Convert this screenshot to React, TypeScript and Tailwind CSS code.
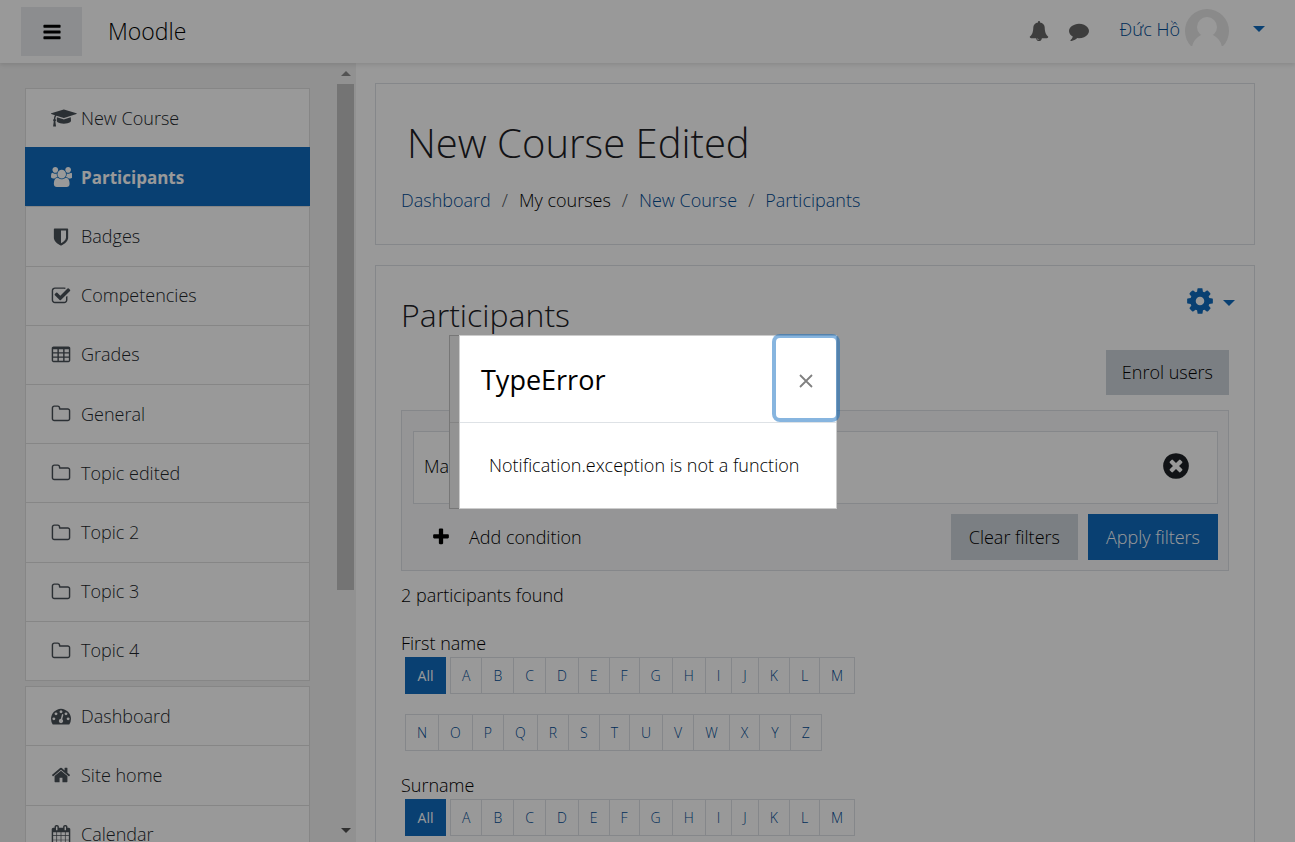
import React from 'react';

const PATHS = {
  bars: 'M1664 1344v128q0 26-19 45t-45 19h-1408q-26 0-45-19t-19-45v-128q0-26 19-45t45-19h1408q26 0 45 19t19 45zm0-512v128q0 26-19 45t-45 19h-1408q-26 0-45-19t-19-45v-128q0-26 19-45t45-19h1408q26 0 45 19t19 45zm0-512v128q0 26-19 45t-45 19h-1408q-26 0-45-19t-19-45v-128q0-26 19-45t45-19h1408q26 0 45 19t19 45z',
  cog: 'M1152 896q0-106-75-181t-181-75-181 75-75 181 75 181 181 75 181-75 75-181zm512-109v222q0 12-8 23t-20 13l-185 28q-19 54-39 91 35 50 107 138 10 12 10 25t-9 23q-27 37-99 108t-94 71q-12 0-26-9l-138-108q-44 23-91 38-16 136-29 186-7 28-36 28h-222q-14 0-24.5-8.5t-11.5-21.5l-28-184q-49-16-90-37l-141 107q-10 9-25 9-14 0-25-11-126-114-165-168-7-10-7-23 0-12 8-23 15-21 51-66.5t54-70.5q-27-50-41-99l-183-27q-13-2-21-12.5t-8-23.5v-222q0-12 8-23t19-13l186-28q14-46 39-92-40-57-107-138-10-12-10-24 0-10 9-23 26-36 98.5-107.5t94.5-71.5q13 0 26 10l138 107q44-23 91-38 16-136 29-186 7-28 36-28h222q14 0 24.5 8.5t11.5 21.5l28 184q49 16 90 37l142-107q9-9 24-9 13 0 25 10 129 119 165 170 7 8 7 22 0 12-8 23-15 21-51 66.5t-54 70.5q26 50 41 98l183 28q13 2 21 12.5t8 23.5z',
  timesCircle: 'M1277 1122q0-26-19-45l-181-181 181-181q19-19 19-45 0-27-19-46l-90-90q-19-19-46-19-26 0-45 19l-181 181-181-181q-19-19-45-19-27 0-46 19l-90 90q-19 19-19 46 0 26 19 45l181 181-181 181q-19 19-19 45 0 27 19 46l90 90q19 19 46 19 26 0 45-19l181-181 181 181q19 19 45 19 27 0 46-19l90-90q19-19 19-46zm387-226q0 209-103 385.5t-279.5 279.5-385.5 103-385.5-103-279.5-279.5-103-385.5 103-385.5 279.5-279.5 385.5-103 385.5 103 279.5 279.5 103 385.5z',
  plus: 'M1600 736v192q0 40-28 68t-68 28h-416v416q0 40-28 68t-68 28h-192q-40 0-68-28t-28-68v-416h-416q-40 0-68-28t-28-68v-192q0-40 28-68t68-28h416v-416q0-40 28-68t68-28h192q40 0 68 28t28 68v416h416q40 0 68 28t28 68z',
  home: 'M1472 992v480q0 26-19 45t-45 19h-384v-384h-256v384h-384q-26 0-45-19t-19-45v-480q0-1 .5-3t.5-3l575-474 575 474q1 2 1 6zm223-69l-62 74q-8 9-21 11h-3q-13 0-21-7l-692-577-692 577q-12 8-24 7-13-2-21-11l-62-74q-8-10-7-23.5t11-21.5l719-599q32-26 76-26t76 26l244 204v-195q0-14 9-23t23-9h192q14 0 23 9t9 23v408l219 182q10 8 11 21.5t-7 23.5z',
  folder: 'M1600 1312v-704q0-40-28-68t-68-28h-704q-40 0-68-28t-28-68v-64q0-40-28-68t-68-28h-320q-40 0-68 28t-28 68v960q0 40 28 68t68 28h1216q40 0 68-28t28-68zm128-704v704q0 92-66 158t-158 66h-1216q-92 0-158-66t-66-158v-960q0-92 66-158t158-66h320q92 0 158 66t66 158v32h672q92 0 158 66t66 158z',
  table: 'M224 128h1344q66 0 113 47t47 113v1088q0 66-47 113t-113 47h-1344q-66 0-113-47t-47-113v-1088q0-66 47-113t113-47zM192 384v256h384v-256zM704 384v256h384v-256zM1216 384v256h384v-256zM192 768v256h384v-256zM704 768v256h384v-256zM1216 768v256h384v-256zM192 1152v256h384v-256zM704 1152v256h384v-256zM1216 1152v256h384v-256z',
  check: 'M1472 930v318q0 119-84.5 203.5t-203.5 84.5h-832q-119 0-203.5-84.5t-84.5-203.5v-832q0-119 84.5-203.5t203.5-84.5h832q63 0 117 25 15 7 18 23 3 17-9 29l-49 49q-10 10-23 10-3 0-9-2-23-6-45-6h-832q-66 0-113 47t-47 113v832q0 66 47 113t113 47h832q66 0 113-47t47-113v-254q0-13 9-22l64-64q10-10 23-10 6 0 12 3 20 8 20 29zm231-489l-814 814q-24 24-57 24t-57-24l-430-430q-24-24-24-57t24-57l110-110q24-24 57-24t57 24l263 263 647-647q24-24 57-24t57 24l110 110q24 24 24 57t-24 57z',
  shield: 'M1344 960v-640h-448v1137q119-63 213-137 235-184 235-360zm192-768v768q0 86-33.5 170.5t-83 150-118 127.5-126.5 103-121 77.5-89.5 49.5-42.5 20q-12 6-26 6t-26-6q-16-7-42.5-20t-89.5-49.5-121-77.5-126.5-103-118-127.5-83-150-33.5-170.5v-768q0-26 19-45t45-19h1152q26 0 45 19t19 45z',
  dashboard: 'M384 1152q0-53-37.5-90.5t-90.5-37.5-90.5 37.5-37.5 90.5 37.5 90.5 90.5 37.5 90.5-37.5 37.5-90.5zm192-448q0-53-37.5-90.5t-90.5-37.5-90.5 37.5-37.5 90.5 37.5 90.5 90.5 37.5 90.5-37.5 37.5-90.5zm428 481l101-382q6-26-7.5-48.5t-38.5-29.5-48 6.5-30 39.5l-101 382q-60 5-107 43.5t-63 98.5q-20 77 20 146t117 89 146-20 89-117q16-60-6-117t-72-91zm660-33q0-53-37.5-90.5t-90.5-37.5-90.5 37.5-37.5 90.5 37.5 90.5 90.5 37.5 90.5-37.5 37.5-90.5zm-640-640q0-53-37.5-90.5t-90.5-37.5-90.5 37.5-37.5 90.5 37.5 90.5 90.5 37.5 90.5-37.5 37.5-90.5zm448 192q0-53-37.5-90.5t-90.5-37.5-90.5 37.5-37.5 90.5 37.5 90.5 90.5 37.5 90.5-37.5 37.5-90.5zm320 448q0 261-141 483-19 29-54 29h-1402q-35 0-54-29-141-221-141-483 0-182 71-348t191-286 286-191 348-71 348 71 286 191 191 286 71 348z',
  bell: 'M912 1696q0-16-16-16-59 0-101.5-42.5t-42.5-101.5q0-16-16-16t-16 16q0 73 51.5 124.5t124.5 51.5q16 0 16-16zm816-288q0 52-38 90t-90 38h-448q0 106-75 181t-181 75-181-75-75-181h-448q-52 0-90-38t-38-90q50-42 91-88t85-119.5 74.5-158.5 50-206 19.5-260q0-152 117-282.5t307-158.5q-8-19-8-39 0-40 28-68t68-28 68 28 28 68q0 20-8 39 190 28 307 158.5t117 282.5q0 139 19.5 260t50 206 74.5 158.5 85 119.5 91 88z',
  comment: 'M1792 896q0 174-120 321.5t-326 233-450 85.5q-70 0-145-8-198 175-460 242-49 14-114 22-17 2-30.5-9t-17.5-29v-1q-3-4-.5-12t2-10 4.5-9.5l6-9 7-8.5 8-9q7-8 31-34.5t34.5-38 31-39.5 32.5-51 27-59 26-76q-157-89-247.5-220t-90.5-281q0-130 71-248.5t191-204.5 286-136.5 348-50.5q244 0 450 85.5t326 233 120 321.5z',
  users: 'M529 896q-162 5-265 128h-134q-82 0-138-40.5t-56-118.5q0-353 124-353 6 0 43.5 21t97.5 42.5 119 21.5q67 0 133-23-5 37-5 66 0 139 81 256zm1071 637q0 120-73 189.5t-194 69.5h-874q-121 0-194-69.5t-73-189.5q0-53 3.5-103.5t14-109 26.5-108.5 43-97.5 62-81 85.5-53.5 111.5-20q10 0 43 21.5t73 48 107 48 135 21.5 135-21.5 107-48 73-48 43-21.5q61 0 111.5 20t85.5 53.5 62 81 43 97.5 26.5 108.5 14 109 3.5 103.5zm-1024-1277q0 106-75 181t-181 75-181-75-75-181 75-181 181-75 181 75 75 181zm704 384q0 159-112.5 271.5t-271.5 112.5-271.5-112.5-112.5-271.5 112.5-271.5 271.5-112.5 271.5 112.5 112.5 271.5zm576 225q0 78-56 118.5t-138 40.5h-134q-103-123-265-128 81-117 81-256 0-29-5-66 66 23 133 23 59 0 119-21.5t97.5-42.5 43.5-21q124 0 124 353zm-128-609q0 106-75 181t-181 75-181-75-75-181 75-181 181-75 181 75 75 181z',
  cap: 'M1774 836l18 316q4 69-82 128t-235 93.5-323 34.5-323-34.5-235-93.5-82-128l18-316 574 181q22 7 48 7t48-7zm530-324q0 23-22 31l-1120 352q-4 1-10 1t-10-1l-652-206q-43 34-71 111.5t-34 178.5q63 36 63 109 0 69-58 107l58 433q2 14-8 25-9 11-24 11h-192q-15 0-24-11-10-11-8-25l58-433q-58-38-58-107 0-73 65-111 11-207 98-330l-333-104q-22-8-22-31t22-31l1120-352q4-1 10-1t10 1l1120 352q22 8 22 31z',
  calendar: 'M192 1664h288v-288h-288v288zm352 0h320v-288h-320v288zm-352-352h288v-320h-288v320zm352 0h320v-320h-320v320zm-352-384h288v-288h-288v288zm736 736h320v-288h-320v288zm-384-736h320v-288h-320v288zm768 736h288v-288h-288v288zm-384-352h320v-320h-320v320zm-352-864v-288q0-13-9.5-22.5t-22.5-9.5h-64q-13 0-22.5 9.5t-9.5 22.5v288q0 13 9.5 22.5t22.5 9.5h64q13 0 22.5-9.5t9.5-22.5zm736 864h288v-320h-288v320zm-384-384h320v-288h-320v288zm384 0h288v-288h-288v288zm32-480v-288q0-13-9.5-22.5t-22.5-9.5h-64q-13 0-22.5 9.5t-9.5 22.5v288q0 13 9.5 22.5t22.5 9.5h64q13 0 22.5-9.5t9.5-22.5zm384-64v1280q0 52-38 90t-90 38h-1408q-52 0-90-38t-38-90v-1280q0-52 38-90t90-38h128v-96q0-66 47-113t113-47h64q66 0 113 47t47 113v96h384v-96q0-66 47-113t113-47h64q66 0 113 47t47 113v96h128q52 0 90 38t38 90z',
};

type IconName = keyof typeof PATHS;

const VIEW_BOXES: Partial<Record<IconName, string>> = {
  users: '-64 0 1920 1792',
  cap: '0 0 2304 1792',
};

function Icon({ name, className = 'h-5' }: { name: IconName; className?: string }) {
  return (
    <svg
      viewBox={VIEW_BOXES[name] ?? '0 0 1792 1792'}
      className={`w-auto shrink-0 fill-current ${className}`}
      fillRule={name === 'table' ? 'evenodd' : 'nonzero'}
      aria-hidden="true"
    >
      <path d={PATHS[name]} />
    </svg>
  );
}

function Caret({ className = '' }: { className?: string }) {
  return (
    <svg viewBox="0 0 12 6" className={`h-[6px] w-3 shrink-0 fill-current ${className}`} aria-hidden="true">
      <path d="M0 0h12L6 6z" />
    </svg>
  );
}

type NavEntry = { label: string; icon: IconName; active?: boolean };

const COURSE_NAV: NavEntry[] = [
  { label: 'New Course', icon: 'cap' },
  { label: 'Participants', icon: 'users', active: true },
  { label: 'Badges', icon: 'shield' },
  { label: 'Competencies', icon: 'check' },
  { label: 'Grades', icon: 'table' },
  { label: 'General', icon: 'folder' },
  { label: 'Topic edited', icon: 'folder' },
  { label: 'Topic 2', icon: 'folder' },
  { label: 'Topic 3', icon: 'folder' },
  { label: 'Topic 4', icon: 'folder' },
];

const SITE_NAV: NavEntry[] = [
  { label: 'Dashboard', icon: 'dashboard' },
  { label: 'Site home', icon: 'home' },
  { label: 'Calendar', icon: 'calendar' },
];

function NavItem({ label, icon, active }: NavEntry) {
  return (
    <li className="flex flex-1">
      <a
        href="#"
        aria-current={active ? 'page' : undefined}
        className={
          active
            ? 'flex flex-1 items-center border border-b-0 border-[#0f6cbf] bg-[#0f6cbf] pl-[25px] text-[17px] font-bold text-white'
            : 'flex flex-1 items-center border border-b-0 border-[#dfdfdf] bg-white pl-[25px] text-[#22272c]'
        }
      >
        <span className={active ? 'flex w-[30px] shrink-0' : 'flex w-[30px] shrink-0 text-[#495057]'}>
          <Icon name={icon} />
        </span>
        {label}
      </a>
    </li>
  );
}

function LetterRow({ letters }: { letters: string }) {
  return (
    <ul className="flex border-l border-[#dee2e6]">
      {letters.split('').map((letter) => (
        <li key={letter}>
          <a
            href="#"
            className="flex h-[37px] items-center border border-l-0 border-[#dee2e6] px-[11px] text-[#004c95]"
          >
            {letter}
          </a>
        </li>
      ))}
    </ul>
  );
}

function InitialBar({ title }: { title: string }) {
  return (
    <section>
      <h3 className="leading-7">{title}</h3>
      <div className="ml-1 flex flex-col gap-5 text-sm">
        <div className="flex gap-1">
          <a href="#" className="flex h-[37px] w-[41px] items-center justify-center bg-[#0f6cbf] font-normal text-white">
            All
          </a>
          <LetterRow letters="ABCDEFGHIJKLM" />
        </div>
        <div className="flex">
          <LetterRow letters="NOPQRSTUVWXYZ" />
        </div>
      </div>
    </section>
  );
}

function Header() {
  return (
    <header className="relative z-10 flex h-[63px] shrink-0 items-center bg-white pl-[21px] pr-[30px] shadow-[0_2px_4px_rgba(0,0,0,0.1)]">
      <button
        type="button"
        aria-label="Side panel"
        className="flex h-[49px] w-[61px] items-center justify-center bg-[#e9ecef]"
      >
        <Icon name="bars" />
      </button>
      <a href="#" className="ml-[26px] text-[23px]">
        Moodle
      </a>
      <div className="ml-auto flex items-center pb-[2px]">
        <button type="button" aria-label="Notifications" className="text-[#666]">
          <Icon name="bell" />
        </button>
        <button type="button" aria-label="Messages" className="ml-5 text-[#666]">
          <Icon name="comment" />
        </button>
        <button type="button" className="ml-[31px] flex items-center text-[#0f6cbf]">
          <span className="pb-[2px] text-[#004c95]">Đức Hồ</span>
          <svg viewBox="0 0 44 44" className="ml-[5px] h-11 w-11" aria-hidden="true">
            <defs>
              <clipPath id="avatar">
                <path d="M0 0h44v37H0z" />
              </clipPath>
            </defs>
            <g clipPath="url(#avatar)">
              <circle cx="22" cy="22" r="22" fill="#e6e6e6" />
              <circle cx="22" cy="18" r="10" fill="#fff" />
              <path d="M7 40c0-7 4-11 9-14h12c5 3 9 7 9 14z" fill="#fff" />
            </g>
          </svg>
          <span className="ml-6 pb-1">
            <Caret />
          </span>
        </button>
      </div>
    </header>
  );
}

function Sidebar() {
  return (
    <aside className="flex w-[356px] shrink-0 overflow-hidden bg-[#f2f2f2]">
      <nav className="min-w-0 flex-1 pl-[25px] pr-[27px] pt-[25px]">
        <ul className="flex h-[593px] flex-col border-b border-[#dfdfdf]">
          {COURSE_NAV.map((entry) => (
            <NavItem key={entry.label} {...entry} />
          ))}
        </ul>
        <ul className="mt-[5px] flex h-[179px] flex-col border-b border-[#dfdfdf]">
          {SITE_NAV.map((entry) => (
            <NavItem key={entry.label} {...entry} />
          ))}
        </ul>
      </nav>
      <div className="flex w-[19px] flex-col pr-[2px]" aria-hidden="true">
        <div className="flex h-[21px] items-center justify-center text-[#8a8a8a]">
          <svg viewBox="0 0 10 5" className="h-[5px] w-[10px] fill-current">
            <path d="M0 5h10L5 0z" />
          </svg>
        </div>
        <div className="h-[65%] bg-[#c1c1c1]" />
        <div className="mt-auto flex h-6 items-center justify-center text-[#505050]">
          <svg viewBox="0 0 10 5" className="h-[5px] w-[10px] fill-current">
            <path d="M0 0h10L5 5z" />
          </svg>
        </div>
      </div>
    </aside>
  );
}

function Crumbs() {
  return (
    <ol className="flex gap-[11px] leading-7">
      <li>
        <a href="#" className="text-[#004c95]">Dashboard</a>
      </li>
      <li className="text-[#495057]">/</li>
      <li>My courses</li>
      <li className="text-[#495057]">/</li>
      <li>
        <a href="#" className="text-[#004c95]">New Course</a>
      </li>
      <li className="text-[#495057]">/</li>
      <li>
        <a href="#" className="text-[#004c95]">Participants</a>
      </li>
    </ol>
  );
}

function Filters() {
  return (
    <div className="mt-[15px] border border-[#dee2e6] bg-[#f8f9fa] pb-[10px] pl-[11px] pr-[10px] pt-5">
      <div className="flex h-[73px] items-center justify-between border border-[#dee2e6] bg-white pb-[3px] pl-[10px] pr-[26px]">
        <span>Match</span>
        <button type="button" aria-label="Remove filter row" className="text-[#1d2125]">
          <Icon name="timesCircle" className="h-[30px]" />
        </button>
      </div>
      <div className="mt-[10px] flex items-center gap-[10px]">
        <button type="button" className="mr-auto flex items-center gap-[18px] pl-[18px]">
          <Icon name="plus" />
          Add condition
        </button>
        <button type="button" className="h-[46px] bg-[#ced4da] px-[18px]">
          Clear filters
        </button>
        <button type="button" className="h-[46px] bg-[#0f6cbf] px-[18px] text-white">
          Apply filters
        </button>
      </div>
    </div>
  );
}

function ErrorDialog() {
  return (
    <div className="fixed inset-0 z-20 flex items-center justify-center bg-black/40 pr-[9px] pt-[2px]">
      <div
        role="dialog"
        aria-modal="true"
        aria-labelledby="dialog-title"
        className="flex min-w-[388px]"
      >
        <div className="flex w-[10px] flex-col border border-r-0 border-[#777] bg-[#939393]" aria-hidden="true">
          <div className="h-[87px] border-b border-[#848484]" />
        </div>
        <div className="flex-1 border border-[#ccc] bg-white">
          <div className="flex h-[87px] items-stretch justify-between border-b border-[#dee2e6] pl-[21px]">
            <h2 id="dialog-title" className="flex items-center pt-[2px] text-[27px] font-normal">
              TypeError
            </h2>
            <button
              type="button"
              aria-label="Close"
              className="mb-1 mt-[2px] flex w-[60px] items-center justify-center rounded-[4px] pt-[6px] text-[#808080] ring-4 ring-[#0f6cbf]/50"
            >
              <svg viewBox="0 0 14 14" className="h-[14px] w-[14px]" fill="none" stroke="currentColor" strokeWidth="1.8" aria-hidden="true">
                <path d="M1 1l12 12M13 1L1 13" />
              </svg>
            </button>
          </div>
          <p className="px-[29px] pb-[29px] pt-7 leading-7">
            Notification.exception is not a function
          </p>
        </div>
      </div>
    </div>
  );
}

export default function App() {
  return (
    <div className="flex h-screen flex-col overflow-hidden bg-white font-['Open_Sans','Noto_Sans',sans-serif] text-[18px] font-light text-black">
      <Header />
      <div className="flex min-h-0 flex-1">
        <Sidebar />
        <main className="min-w-0 flex-1 overflow-hidden pl-[19px] pr-10 pt-5">
          <div className="border border-[#dee2e6] px-[25px] pb-[30px] pt-[29px]">
            <h1 className="pl-[6px] text-[40px] leading-[60px] text-[#1d2125]">New Course Edited</h1>
            <div className="mt-[13px]">
              <Crumbs />
            </div>
          </div>
          <div className="mt-5 border border-[#dee2e6] px-[25px] pb-10 pt-5">
            <div className="flex h-[64px] items-start justify-between">
              <h2 className="text-[32px] leading-[58px] text-[#1d2125]">Participants</h2>
              <button type="button" aria-label="Actions" className="-mr-[6px] flex items-center gap-2 text-[#0f6cbf]">
                <Icon name="cog" className="h-[30px]" />
                <span className="pt-1">
                  <Caret />
                </span>
              </button>
            </div>
            <div className="flex justify-end">
              <button type="button" className="h-[45px] bg-[#ced4da] px-4">
                Enrol users
              </button>
            </div>
            <Filters />
            <p className="mt-[10px] leading-7">2 participants found</p>
            <div className="mt-5 flex flex-col gap-5">
              <InitialBar title="First name" />
              <InitialBar title="Surname" />
            </div>
          </div>
        </main>
      </div>
      <ErrorDialog />
    </div>
  );
}
